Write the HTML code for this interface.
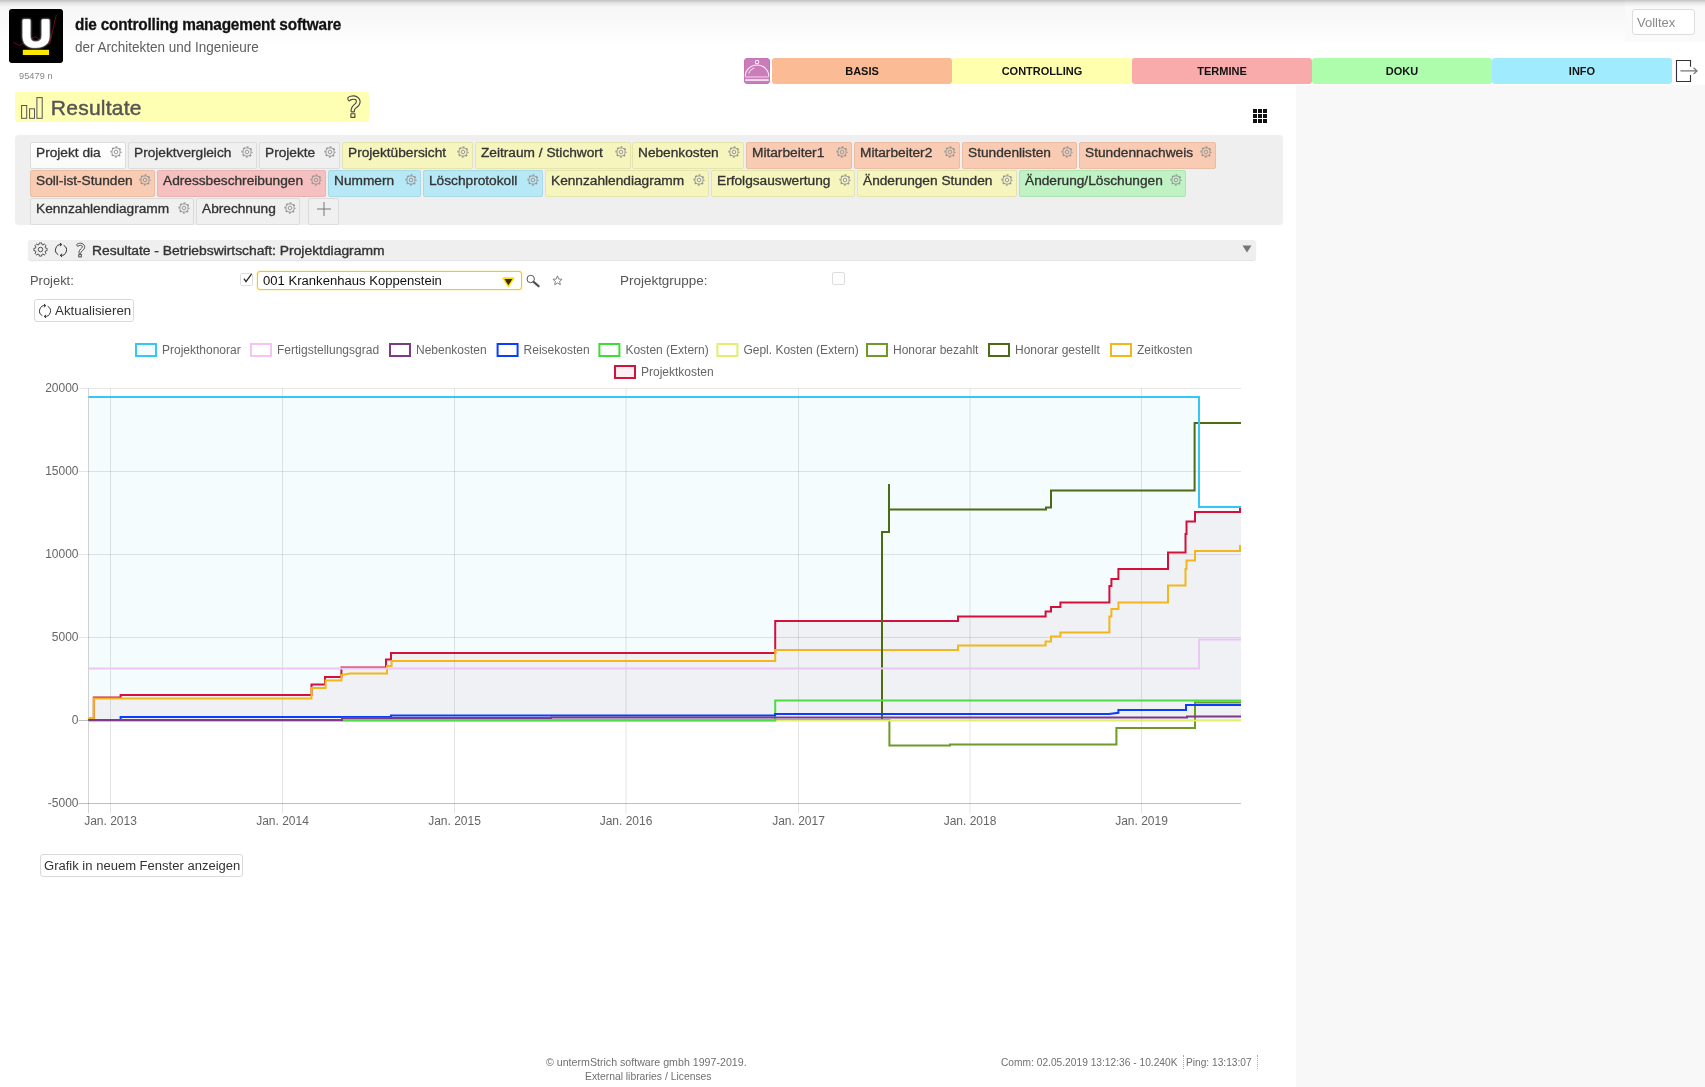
<!DOCTYPE html>
<html lang="de">
<head>
<meta charset="utf-8">
<title>Resultate - Betriebswirtschaft: Projektdiagramm</title>
<style>
html,body{margin:0;padding:0;}
body{width:1705px;height:1087px;overflow:hidden;background:#fff;position:relative;
 font-family:"Liberation Sans","DejaVu Sans",sans-serif;color:#333;font-size:13px;}
#page{position:absolute;left:0;top:0;width:1705px;height:1087px;overflow:hidden;will-change:transform;}
.abs{position:absolute;}
.t{position:absolute;white-space:nowrap;line-height:1;}
#hdr{left:0;top:0;width:1705px;height:88px;background:linear-gradient(#f5f5f5 0px,#f8f8f8 18px,#fcfcfc 34px,#fff 44px);}
#topshade{left:0;top:0;width:1705px;height:7px;background:linear-gradient(rgba(0,0,0,.22),rgba(0,0,0,.07) 45%,rgba(0,0,0,0));}
#rpanel{left:1296px;top:85px;width:409px;height:1002px;background:#f8f8f8;}
.nav{position:absolute;top:58px;height:26px;width:180px;border-radius:3px;text-align:center;
 font-weight:bold;font-size:11px;line-height:26px;color:#111;letter-spacing:0;}
.tab{position:absolute;height:25px;border:1px solid #dcdcdc;border-radius:2px;box-sizing:content-box;
 font-size:12.3px;line-height:1;color:#333;white-space:nowrap;}
.tab span{position:absolute;left:5.4px;top:4.2px;transform-origin:0 0;transform:scaleX(1.113);-webkit-text-stroke:.3px #333;}
.tab svg{position:absolute;right:2.9px;top:2.7px;}
.c0{background:#f0f0f0;} .cy{background:#f5f5bd;border-color:#e4e4ae;} .co{background:#f8cbb2;border-color:#e9bea6;}
.cr{background:#f7c0c0;border-color:#e8b3b3;} .cb{background:#b6e8f6;border-color:#a9d9e7;} .cg{background:#bff3c3;border-color:#b0e3b4;}
.tab.act{background:linear-gradient(#fff,#f9f9f9);}
.btn{position:absolute;border:1px solid #d9d9d9;border-radius:3px;background:#fff;box-sizing:border-box;}
</style>
</head>
<body>
<div id="page">
<div id="hdr" class="abs"></div>
<div class="abs" style="left:1625px;top:0;width:80px;height:42px;background:#fafafa"></div>
<div id="topshade" class="abs"></div>
<div id="rpanel" class="abs"></div>
<svg class="abs" style="left:9px;top:9px" width="54" height="54" viewBox="0 0 54 54">
<defs><filter id="glow" x="-30%" y="-30%" width="160%" height="160%"><feGaussianBlur stdDeviation="1.1" result="b"/><feMerge><feMergeNode in="b"/><feMergeNode in="SourceGraphic"/></feMerge></filter></defs>
<rect x="0" y="0" width="54" height="54" rx="3" ry="3" fill="#000"/>
<polyline points="4.25,33.2 10.5,36.5 15,33.7 20,31 24.1,28.7 26.6,27.9 29.1,29.5 34,33 39,34.1 40.7,34.5 41.5,30.75 47.3,5.9" fill="none" stroke="#b00a22" stroke-width="0.65"/>
<text x="0" y="38.3" text-anchor="middle" transform="translate(27 0) scale(1.07 1)" font-family="Liberation Sans, sans-serif" font-weight="bold" font-size="39" fill="#fff" stroke="#fff" stroke-width="1.6" stroke-linejoin="round" filter="url(#glow)">U</text>
<rect x="13.8" y="40.8" width="26.2" height="5.2" fill="#ffe800"/>
</svg>
<div class="t" style="left:75px;top:16px;font-size:17px;font-weight:bold;color:#111;transform-origin:0 0;transform:scaleX(.904);letter-spacing:-.2px;-webkit-text-stroke:.3px #111" id="ttl">die controlling management software</div>
<div class="t" style="left:75px;top:40px;font-size:14px;color:#5e5e5e;transform-origin:0 0;transform:scaleX(.964)" id="sub">der Architekten und Ingenieure</div>
<div class="t" style="left:19px;top:71.5px;font-size:9.2px;color:#858585;letter-spacing:.05px" id="num">95479 n</div>
<div class="abs" style="left:1632px;top:9px;width:63px;height:26px;box-sizing:border-box;border:1px solid #ddd;border-radius:3px;background:#fff;overflow:hidden"><span class="t" style="left:4px;top:6px;font-size:13px;color:#8a8a8a" id="vt">Volltex</span></div>
<div class="abs" style="left:744px;top:58px;width:26px;height:26px;border-radius:3px;background:#cb7dbb;box-sizing:border-box;border:1px solid #c670b5"></div>
<svg class="abs" style="left:744px;top:58px" width="26" height="26" viewBox="0 0 26 26" fill="none" stroke="#fbf1f9" stroke-width="1.05">
<circle cx="13.05" cy="4" r="1.75"/><path d="M1.25 18.4 A11.8 11.5 0 0 1 24.85 18.4"/><path d="M4.6 15.6 A9 9 0 0 1 10.3 9.9" stroke-width=".9"/>
<rect x="1.2" y="18.1" width="23.6" height="1.7" fill="rgba(255,255,255,.42)" stroke="none"/><rect x="1.2" y="21.1" width="23.6" height="1.9" fill="rgba(255,255,255,.72)" stroke="none"/></svg>
<div class="nav" style="left:772px;background:#fbbc95">BASIS</div>
<div class="nav" style="left:952px;background:#ffffad">CONTROLLING</div>
<div class="nav" style="left:1132px;background:#f9aaaa">TERMINE</div>
<div class="nav" style="left:1312px;background:#adfdad">DOKU</div>
<div class="nav" style="left:1492px;background:#a0ebfd">INFO</div>
<svg class="abs" style="left:1674px;top:57px" width="26" height="28" viewBox="0 0 26 28" fill="none" stroke="#333" stroke-width="1.1">
<path d="M16.5 9.7 V3.5 H2.5 V24.5 H16.5 V18.1"/><path d="M6.4 13.9 H22.6 M19.6 10.7 L23 13.9 L19.6 17.1" stroke="#777" stroke-width="1.3"/></svg>
<div class="abs" style="left:15px;top:92px;width:354px;height:30px;border-radius:3px;background:#ffffb3"></div>
<svg class="abs" style="left:20px;top:96px" width="26" height="24" viewBox="0 0 26 24" fill="none" stroke="#555" stroke-width="1"><rect x="1.6" y="9.5" width="5.1" height="12.8"/><rect x="9.6" y="12.8" width="4.9" height="9.5"/><rect x="16.9" y="1.6" width="5.3" height="20.7"/></svg>
<div class="t" style="left:50.8px;top:97px;font-size:21px;font-weight:normal;color:#555;letter-spacing:.25px;-webkit-text-stroke:.45px #555" id="res">Resultate</div>
<svg class="abs" style="left:345px;top:94px" width="18" height="26" viewBox="0 0 18 26" fill="none" stroke="#4a4a4a" stroke-width="1.15" stroke-linejoin="round"><path d="M3.00 3.60 C3.42 3.05 4.62 2.58 5.60 2.30 C6.58 2.02 7.73 1.75 8.90 1.90 C10.07 2.05 11.62 2.50 12.60 3.20 C13.58 3.90 14.40 5.18 14.80 6.10 C15.20 7.02 15.18 7.77 15.00 8.70 C14.82 9.63 14.40 10.80 13.70 11.70 C13.00 12.60 11.50 13.43 10.80 14.10 C10.10 14.77 9.75 15.12 9.50 15.70 C9.25 16.28 9.59 17.23 9.30 17.60 C9.01 17.97 8.27 17.90 7.75 17.90 C7.23 17.90 6.46 17.97 6.20 17.60 C5.94 17.23 6.05 16.45 6.20 15.70 C6.35 14.95 6.65 13.90 7.10 13.10 C7.55 12.30 8.28 11.57 8.90 10.90 C9.52 10.23 10.40 9.77 10.80 9.10 C11.20 8.43 11.37 7.48 11.30 6.90 C11.23 6.32 10.85 5.88 10.40 5.60 C9.95 5.32 9.28 5.20 8.60 5.20 C7.92 5.20 7.02 5.32 6.30 5.60 C5.58 5.88 4.83 6.90 4.30 6.90 C3.77 6.90 3.32 6.15 3.10 5.60 C2.88 5.05 2.58 4.15 3.00 3.60 Z"/><rect x="5.9" y="19.7" width="4" height="3.6"/></svg>
<svg class="abs" style="left:1253px;top:109px" width="14" height="14" viewBox="0 0 14 14" fill="#111"><rect x="0" y="0" width="4" height="4"/><rect x="5" y="0" width="4" height="4"/><rect x="10" y="0" width="4" height="4"/><rect x="0" y="5" width="4" height="4"/><rect x="5" y="5" width="4" height="4"/><rect x="10" y="5" width="4" height="4"/><rect x="0" y="10" width="4" height="4"/><rect x="5" y="10" width="4" height="4"/><rect x="10" y="10" width="4" height="4"/></svg>
<div class="abs" style="left:15px;top:135px;width:1268px;height:90px;border-radius:4px;background:#efefef"></div>
<div class="tab c0 act" style="left:30px;top:142px;width:94px"><span>Projekt dia</span><svg width="12" height="12" viewBox="-6 -6 12 12" fill="none" stroke="#999"><circle r="5" stroke-width="1.3" stroke-dasharray="1.9 2.027" stroke-dashoffset=".95"/><circle r="4.1" stroke-width="1"/><circle r="1.8" stroke-width="1"/></svg></div>
<div class="tab c0" style="left:128px;top:142px;width:127px"><span>Projektvergleich</span><svg width="12" height="12" viewBox="-6 -6 12 12" fill="none" stroke="#999"><circle r="5" stroke-width="1.3" stroke-dasharray="1.9 2.027" stroke-dashoffset=".95"/><circle r="4.1" stroke-width="1"/><circle r="1.8" stroke-width="1"/></svg></div>
<div class="tab c0" style="left:259px;top:142px;width:79px"><span>Projekte</span><svg width="12" height="12" viewBox="-6 -6 12 12" fill="none" stroke="#999"><circle r="5" stroke-width="1.3" stroke-dasharray="1.9 2.027" stroke-dashoffset=".95"/><circle r="4.1" stroke-width="1"/><circle r="1.8" stroke-width="1"/></svg></div>
<div class="tab cy" style="left:342px;top:142px;width:129px"><span>Projektübersicht</span><svg width="12" height="12" viewBox="-6 -6 12 12" fill="none" stroke="#999"><circle r="5" stroke-width="1.3" stroke-dasharray="1.9 2.027" stroke-dashoffset=".95"/><circle r="4.1" stroke-width="1"/><circle r="1.8" stroke-width="1"/></svg></div>
<div class="tab cy" style="left:475px;top:142px;width:154px"><span>Zeitraum / Stichwort</span><svg width="12" height="12" viewBox="-6 -6 12 12" fill="none" stroke="#999"><circle r="5" stroke-width="1.3" stroke-dasharray="1.9 2.027" stroke-dashoffset=".95"/><circle r="4.1" stroke-width="1"/><circle r="1.8" stroke-width="1"/></svg></div>
<div class="tab cy" style="left:632px;top:142px;width:110px"><span>Nebenkosten</span><svg width="12" height="12" viewBox="-6 -6 12 12" fill="none" stroke="#999"><circle r="5" stroke-width="1.3" stroke-dasharray="1.9 2.027" stroke-dashoffset=".95"/><circle r="4.1" stroke-width="1"/><circle r="1.8" stroke-width="1"/></svg></div>
<div class="tab co" style="left:746px;top:142px;width:104px"><span>Mitarbeiter1</span><svg width="12" height="12" viewBox="-6 -6 12 12" fill="none" stroke="#999"><circle r="5" stroke-width="1.3" stroke-dasharray="1.9 2.027" stroke-dashoffset=".95"/><circle r="4.1" stroke-width="1"/><circle r="1.8" stroke-width="1"/></svg></div>
<div class="tab co" style="left:854px;top:142px;width:104px"><span>Mitarbeiter2</span><svg width="12" height="12" viewBox="-6 -6 12 12" fill="none" stroke="#999"><circle r="5" stroke-width="1.3" stroke-dasharray="1.9 2.027" stroke-dashoffset=".95"/><circle r="4.1" stroke-width="1"/><circle r="1.8" stroke-width="1"/></svg></div>
<div class="tab co" style="left:962px;top:142px;width:113px"><span>Stundenlisten</span><svg width="12" height="12" viewBox="-6 -6 12 12" fill="none" stroke="#999"><circle r="5" stroke-width="1.3" stroke-dasharray="1.9 2.027" stroke-dashoffset=".95"/><circle r="4.1" stroke-width="1"/><circle r="1.8" stroke-width="1"/></svg></div>
<div class="tab co" style="left:1079px;top:142px;width:135px"><span>Stundennachweis</span><svg width="12" height="12" viewBox="-6 -6 12 12" fill="none" stroke="#999"><circle r="5" stroke-width="1.3" stroke-dasharray="1.9 2.027" stroke-dashoffset=".95"/><circle r="4.1" stroke-width="1"/><circle r="1.8" stroke-width="1"/></svg></div>
<div class="tab co" style="left:30px;top:170px;width:123px"><span>Soll-ist-Stunden</span><svg width="12" height="12" viewBox="-6 -6 12 12" fill="none" stroke="#999"><circle r="5" stroke-width="1.3" stroke-dasharray="1.9 2.027" stroke-dashoffset=".95"/><circle r="4.1" stroke-width="1"/><circle r="1.8" stroke-width="1"/></svg></div>
<div class="tab cr" style="left:157px;top:170px;width:167px"><span>Adressbeschreibungen</span><svg width="12" height="12" viewBox="-6 -6 12 12" fill="none" stroke="#999"><circle r="5" stroke-width="1.3" stroke-dasharray="1.9 2.027" stroke-dashoffset=".95"/><circle r="4.1" stroke-width="1"/><circle r="1.8" stroke-width="1"/></svg></div>
<div class="tab cb" style="left:328px;top:170px;width:91px"><span>Nummern</span><svg width="12" height="12" viewBox="-6 -6 12 12" fill="none" stroke="#999"><circle r="5" stroke-width="1.3" stroke-dasharray="1.9 2.027" stroke-dashoffset=".95"/><circle r="4.1" stroke-width="1"/><circle r="1.8" stroke-width="1"/></svg></div>
<div class="tab cb" style="left:423px;top:170px;width:118px"><span>Löschprotokoll</span><svg width="12" height="12" viewBox="-6 -6 12 12" fill="none" stroke="#999"><circle r="5" stroke-width="1.3" stroke-dasharray="1.9 2.027" stroke-dashoffset=".95"/><circle r="4.1" stroke-width="1"/><circle r="1.8" stroke-width="1"/></svg></div>
<div class="tab cy" style="left:545px;top:170px;width:162px"><span>Kennzahlendiagramm</span><svg width="12" height="12" viewBox="-6 -6 12 12" fill="none" stroke="#999"><circle r="5" stroke-width="1.3" stroke-dasharray="1.9 2.027" stroke-dashoffset=".95"/><circle r="4.1" stroke-width="1"/><circle r="1.8" stroke-width="1"/></svg></div>
<div class="tab cy" style="left:711px;top:170px;width:142px"><span>Erfolgsauswertung</span><svg width="12" height="12" viewBox="-6 -6 12 12" fill="none" stroke="#999"><circle r="5" stroke-width="1.3" stroke-dasharray="1.9 2.027" stroke-dashoffset=".95"/><circle r="4.1" stroke-width="1"/><circle r="1.8" stroke-width="1"/></svg></div>
<div class="tab cy" style="left:857px;top:170px;width:158px"><span>Änderungen Stunden</span><svg width="12" height="12" viewBox="-6 -6 12 12" fill="none" stroke="#999"><circle r="5" stroke-width="1.3" stroke-dasharray="1.9 2.027" stroke-dashoffset=".95"/><circle r="4.1" stroke-width="1"/><circle r="1.8" stroke-width="1"/></svg></div>
<div class="tab cg" style="left:1019px;top:170px;width:165px"><span>Änderung/Löschungen</span><svg width="12" height="12" viewBox="-6 -6 12 12" fill="none" stroke="#999"><circle r="5" stroke-width="1.3" stroke-dasharray="1.9 2.027" stroke-dashoffset=".95"/><circle r="4.1" stroke-width="1"/><circle r="1.8" stroke-width="1"/></svg></div>
<div class="tab c0" style="left:30px;top:198px;width:162px"><span>Kennzahlendiagramm</span><svg width="12" height="12" viewBox="-6 -6 12 12" fill="none" stroke="#999"><circle r="5" stroke-width="1.3" stroke-dasharray="1.9 2.027" stroke-dashoffset=".95"/><circle r="4.1" stroke-width="1"/><circle r="1.8" stroke-width="1"/></svg></div>
<div class="tab c0" style="left:196px;top:198px;width:102px"><span>Abrechnung</span><svg width="12" height="12" viewBox="-6 -6 12 12" fill="none" stroke="#999"><circle r="5" stroke-width="1.3" stroke-dasharray="1.9 2.027" stroke-dashoffset=".95"/><circle r="4.1" stroke-width="1"/><circle r="1.8" stroke-width="1"/></svg></div>
<div class="tab c0" style="left:308px;top:198px;width:29px"><svg style="left:7.5px;top:2.5px;right:auto" width="14" height="14" viewBox="0 0 14 14" stroke="#777" stroke-width="1" fill="none"><path d="M7 0 V14 M0 7 H14"/></svg></div>
<div class="abs" style="left:28px;top:240px;width:1228px;height:20px;border-radius:3px;background:#efefef;box-shadow:0 1px 1px rgba(0,0,0,.12)"></div>
<svg class="abs" style="left:33px;top:242px" width="15" height="15" viewBox="0 0 16 16" fill="none" stroke="#444" stroke-width="1.0" stroke-linejoin="round"><path d="M6.48 2.71 L6.71 1.02 A7.10 7.10 0 0 1 9.29 1.02 L9.52 2.71 A5.50 5.50 0 0 1 10.66 3.19 L12.03 2.15 A7.10 7.10 0 0 1 13.85 3.97 L12.81 5.34 A5.50 5.50 0 0 1 13.29 6.48 L14.98 6.71 A7.10 7.10 0 0 1 14.98 9.29 L13.29 9.52 A5.50 5.50 0 0 1 12.81 10.66 L13.85 12.03 A7.10 7.10 0 0 1 12.03 13.85 L10.66 12.81 A5.50 5.50 0 0 1 9.52 13.29 L9.29 14.98 A7.10 7.10 0 0 1 6.71 14.98 L6.48 13.29 A5.50 5.50 0 0 1 5.34 12.81 L3.97 13.85 A7.10 7.10 0 0 1 2.15 12.03 L3.19 10.66 A5.50 5.50 0 0 1 2.71 9.52 L1.02 9.29 A7.10 7.10 0 0 1 1.02 6.71 L2.71 6.48 A5.50 5.50 0 0 1 3.19 5.34 L2.15 3.97 A7.10 7.10 0 0 1 3.97 2.15 L5.34 3.19 A5.50 5.50 0 0 1 6.48 2.71 Z"/><circle cx="8" cy="8" r="2.4"/></svg>
<svg class="abs" style="left:52px;top:241px" width="18" height="18" viewBox="-9 -9 18 18" fill="none" stroke="#333" stroke-width="1.0"><path d="M-2.70 4.68 A5.4 5.4 0 0 1 0.6 -5.4 M2.70 -4.68 A5.4 5.4 0 0 1 -0.6 5.4"/><path d="M-1.1 -7.00 L0.8 -5.40 L-1.1 -3.80 M1.1 3.80 L-0.8 5.40 L1.1 7.00"/></svg>
<svg class="abs" style="left:75.2px;top:241.9px" width="11.52" height="16.64" viewBox="0 0 18 26" fill="none" stroke="#444" stroke-width="1.45"><path d="M3.00 3.60 C3.42 3.05 4.62 2.58 5.60 2.30 C6.58 2.02 7.73 1.75 8.90 1.90 C10.07 2.05 11.62 2.50 12.60 3.20 C13.58 3.90 14.40 5.18 14.80 6.10 C15.20 7.02 15.18 7.77 15.00 8.70 C14.82 9.63 14.40 10.80 13.70 11.70 C13.00 12.60 11.50 13.43 10.80 14.10 C10.10 14.77 9.75 15.12 9.50 15.70 C9.25 16.28 9.59 17.23 9.30 17.60 C9.01 17.97 8.27 17.90 7.75 17.90 C7.23 17.90 6.46 17.97 6.20 17.60 C5.94 17.23 6.05 16.45 6.20 15.70 C6.35 14.95 6.65 13.90 7.10 13.10 C7.55 12.30 8.28 11.57 8.90 10.90 C9.52 10.23 10.40 9.77 10.80 9.10 C11.20 8.43 11.37 7.48 11.30 6.90 C11.23 6.32 10.85 5.88 10.40 5.60 C9.95 5.32 9.28 5.20 8.60 5.20 C7.92 5.20 7.02 5.32 6.30 5.60 C5.58 5.88 4.83 6.90 4.30 6.90 C3.77 6.90 3.32 6.15 3.10 5.60 C2.88 5.05 2.58 4.15 3.00 3.60 Z"/><rect x="5.9" y="19.7" width="4" height="3.6"/></svg>
<div class="t" id="sect" style="left:91.8px;top:244.73px;font-size:12.5px;color:#333;transform-origin:0 0;transform:scaleX(1.1080);-webkit-text-stroke:.35px #333;">Resultate - Betriebswirtschaft: Projektdiagramm</div>
<svg class="abs" style="left:1242px;top:245px" width="10" height="8" viewBox="0 0 10 8"><path d="M.5 .5 H9.5 L5 7.5 Z" fill="#777"/></svg>
<div class="t" id="lp" style="left:29.7px;top:274.82px;font-size:12.5px;color:#555;transform-origin:0 0;transform:scaleX(1.0332);">Projekt:</div>
<div class="abs" style="left:240px;top:273px;width:13px;height:13px;box-sizing:border-box;border:1px solid #ddd;border-radius:2px;background:#fff"></div>
<svg class="abs" style="left:241px;top:273px" width="12" height="12" viewBox="0 0 12 12" fill="none" stroke="#222" stroke-width="1.1"><path d="M3 5.6 L5 8.6 L10.6 0.8" stroke-width="1.2"/></svg>
<div class="abs" style="left:257px;top:271px;width:265px;height:19px;box-sizing:border-box;border:1px solid #f4cc00;border-radius:3px;background:#fff;box-shadow:0 0 1.5px rgba(247,208,0,.9)"></div>
<div class="t" id="sel" style="left:262.5px;top:274.82px;font-size:12.5px;color:#111;transform-origin:0 0;transform:scaleX(1.0464);">001 Krankenhaus Koppenstein</div>
<svg class="abs" style="left:500px;top:275px" width="17" height="15" viewBox="0 0 17 15"><path d="M3.6 3.4 H13.2 L8.4 11 Z" fill="#3a2600" stroke="#ffe000" stroke-width="2.2" stroke-linejoin="round"/><path d="M4.4 3.9 H12.4 L8.4 10.2 Z" fill="#3a2600"/></svg>
<svg class="abs" style="left:524px;top:272px" width="18" height="18" viewBox="0 0 18 18" fill="none" stroke="#555" stroke-width="1"><circle cx="6.7" cy="7" r="3.7"/><path d="M9.6 9.9 L14.6 14.2" stroke-width="2.4" stroke="#666" stroke-linecap="round"/><path d="M9.4 9.7 L14.8 14.4" stroke-width=".8" stroke="#333"/></svg>
<svg class="abs" style="left:552px;top:274.5px" width="11" height="11" viewBox="0 0 12 12" fill="none" stroke="#777" stroke-width="1"><path d="M6 1 L7.4 4.4 L11 4.7 L8.3 7 L9.1 10.6 L6 8.7 L2.9 10.6 L3.7 7 L1 4.7 L4.6 4.4 Z"/></svg>
<div class="t" id="lpg" style="left:620px;top:274.82px;font-size:12.5px;color:#555;transform-origin:0 0;transform:scaleX(1.0761);">Projektgruppe:</div>
<div class="abs" style="left:832px;top:272px;width:13px;height:13px;box-sizing:border-box;border:1px solid #dcdcdc;border-radius:2px;background:#fff"></div>
<div class="btn" style="left:34px;top:299px;width:100px;height:23px"></div>
<svg class="abs" style="left:36px;top:301.5px" width="18" height="18" viewBox="-9 -9 18 18" fill="none" stroke="#333" stroke-width="1.0"><path d="M-2.70 4.68 A5.4 5.4 0 0 1 0.6 -5.4 M2.70 -4.68 A5.4 5.4 0 0 1 -0.6 5.4"/><path d="M-1.1 -7.00 L0.8 -5.40 L-1.1 -3.80 M1.1 3.80 L-0.8 5.40 L1.1 7.00"/></svg>
<div class="t" id="akt" style="left:54.9px;top:304.62px;font-size:12.5px;color:#333;transform-origin:0 0;transform:scaleX(1.0646);">Aktualisieren</div>
<div class="btn" style="left:40px;top:854px;width:203px;height:23px"></div>
<div class="t" id="graf" style="left:43.5px;top:859.92px;font-size:12.5px;color:#333;transform-origin:0 0;transform:scaleX(1.0425);">Grafik in neuem Fenster anzeigen</div>
<svg class="abs" style="left:0;top:330px" width="1296" height="510" viewBox="0 330 1296 510" font-family="Liberation Sans, Arial, sans-serif" font-size="12" fill="#666">
<path d="M88.5 397 H1199 V507 H1241 V720.5 H88.5 Z" fill="#f4fcfe"/>
<path d="M88.5 720 H93.8 V697.6 H120.6 V695 H311.5 V684.6 H325 V677 H341.4 V667.4 H386 V659.6 H391 V653 H775.2 V621 H958 V616.4 H1045.6 V611.6 H1051 V607 H1060.4 V602.4 H1109.4 V586 H1111.4 V579 H1118.4 V569 H1168 V552.4 H1185.5 V534 H1186.5 V521.4 H1195 V512 H1240 V509 H1241 V720.5 H88.5 Z" fill="#eff1f5"/>
<path d="M110.5 388.5 V813.5 M282.5 388.5 V813.5 M454.5 388.5 V813.5 M626 388.5 V813.5 M798.5 388.5 V813.5 M970 388.5 V813.5 M1141.5 388.5 V813.5 M78.5 388.5 H1241 M78.5 471.5 H1241 M78.5 554.5 H1241 M78.5 637.5 H1241 M78.5 803.5 H1241 " stroke="rgba(0,0,0,.1)" stroke-width="1" fill="none"/>
<path d="M88.5 388.5 V813.5 M78.5 803.5 H1241" stroke="rgba(0,0,0,.17)" stroke-width="1" fill="none"/>
<path d="M78.5 720.5 H1241" stroke="rgba(0,0,0,.25)" stroke-width="1" fill="none"/>
<path d="M88.5 720 H93.8 V697.6 H120.6 V695 H311.5 V684.6 H325 V677 H341.4 V667.4 H386 V659.6 H391 V653 H775.2 V621 H958 V616.4 H1045.6 V611.6 H1051 V607 H1060.4 V602.4 H1109.4 V586 H1111.4 V579 H1118.4 V569 H1168 V552.4 H1185.5 V534 H1186.5 V521.4 H1195 V512 H1240 V509 H1241" fill="none" stroke="#d3123b" stroke-width="2" stroke-linejoin="miter"/>
<path d="M88.5 720 L89.5 718 H93.8 V698.6 H311.5 V688 H325.6 V680.6 H341.4 V675 L350 673.6 H387 V666 H391.6 V661 H775.2 V650 H958 V645.6 H1045.6 V641.4 H1051 V636.6 H1060.4 V632.4 H1109.4 V616.4 H1111.4 V609 H1118.4 V602.6 H1168 V585.4 H1185.5 V569 H1186.5 V560.4 H1195 V551 H1240 V546 H1241" fill="none" stroke="#f2b71a" stroke-width="2" stroke-linejoin="miter"/>
<path d="M88.5 720 H882 V532 H889 V484 V509.6 H1046 V507.6 H1051 V490.6 H1194.6 V423 H1241" fill="none" stroke="#4b6b14" stroke-width="2" stroke-linejoin="miter"/>
<path d="M88.5 720 H889.4 V745.4 H950 V744.6 H1116.4 V728 H1195 V702.4 H1241" fill="none" stroke="#6f9a27" stroke-width="2" stroke-linejoin="miter"/>
<path d="M88.5 720.6 H1241" fill="none" stroke="#e2ee6e" stroke-width="2" stroke-linejoin="miter"/>
<path d="M88.5 720.5 H775.2 V700.4 H1241" fill="none" stroke="#4ddb46" stroke-width="2" stroke-linejoin="miter"/>
<path d="M88.5 720 H120.6 V717 H391 V715.4 H775 V714 H1109 L1118.4 712.8 V710 H1186 V705 H1241" fill="none" stroke="#0b3dff" stroke-width="2" stroke-linejoin="miter"/>
<path d="M88.5 720 H342 V718 H551 V717.6 H1187 V716.6 H1241" fill="none" stroke="#7c3b86" stroke-width="2" stroke-linejoin="miter"/>
<path d="M88.5 668.5 H1199 V639.6 H1241" fill="none" stroke="#ecc6f5" stroke-width="2" stroke-linejoin="miter"/>
<path d="M88.5 397 H1199 V507 H1241" fill="none" stroke="#36c5f4" stroke-width="2" stroke-linejoin="miter"/>
<text x="78.5" y="392.0" text-anchor="end">20000</text>
<text x="78.5" y="475.0" text-anchor="end">15000</text>
<text x="78.5" y="558.0" text-anchor="end">10000</text>
<text x="78.5" y="641.0" text-anchor="end">5000</text>
<text x="78.5" y="724.0" text-anchor="end">0</text>
<text x="78.5" y="807.0" text-anchor="end">-5000</text>
<text x="110.5" y="825" text-anchor="middle">Jan. 2013</text>
<text x="282.5" y="825" text-anchor="middle">Jan. 2014</text>
<text x="454.5" y="825" text-anchor="middle">Jan. 2015</text>
<text x="626" y="825" text-anchor="middle">Jan. 2016</text>
<text x="798.5" y="825" text-anchor="middle">Jan. 2017</text>
<text x="970" y="825" text-anchor="middle">Jan. 2018</text>
<text x="1141.5" y="825" text-anchor="middle">Jan. 2019</text>
<rect x="136" y="344" width="20" height="12" fill="rgba(54,197,244,.06)" stroke="#36c5f4" stroke-width="2"/><text x="162" y="354.3">Projekthonorar</text>
<rect x="251" y="344" width="20" height="12" fill="#fff" stroke="#f5c4f7" stroke-width="2"/><text x="277" y="354.3">Fertigstellungsgrad</text>
<rect x="390" y="344" width="20" height="12" fill="#fff" stroke="#7c3b86" stroke-width="2"/><text x="416" y="354.3">Nebenkosten</text>
<rect x="497.6" y="344" width="20" height="12" fill="#fff" stroke="#0b3dff" stroke-width="2"/><text x="523.6" y="354.3">Reisekosten</text>
<rect x="599.4" y="344" width="20" height="12" fill="#fff" stroke="#3ddc36" stroke-width="2"/><text x="625.4" y="354.3">Kosten (Extern)</text>
<rect x="717.4" y="344" width="20" height="12" fill="#fff" stroke="#e2ee6e" stroke-width="2"/><text x="743.4" y="354.3">Gepl. Kosten (Extern)</text>
<rect x="867" y="344" width="20" height="12" fill="#fff" stroke="#6f9a27" stroke-width="2"/><text x="893" y="354.3">Honorar bezahlt</text>
<rect x="989" y="344" width="20" height="12" fill="#fff" stroke="#4b6b14" stroke-width="2"/><text x="1015" y="354.3">Honorar gestellt</text>
<rect x="1111" y="344" width="20" height="12" fill="#fff" stroke="#f2b71a" stroke-width="2"/><text x="1137" y="354.3">Zeitkosten</text>
<rect x="615" y="366" width="20" height="12" fill="rgba(220,20,60,.07)" stroke="#d3123b" stroke-width="2"/><text x="641" y="376.3">Projektkosten</text>
</svg>

<div class="t" id="f1" style="left:546.2px;top:1057.97px;font-size:10.2px;color:#707070;transform-origin:0 0;transform:scaleX(1.0441);">© untermStrich software gmbh 1997-2019.</div>
<div class="t" id="f2" style="left:584.5px;top:1071.77px;font-size:10.2px;color:#707070;transform-origin:0 0;transform:scaleX(1.0154);">External libraries / Licenses</div>
<div class="t" id="f3" style="left:1001.3px;top:1057.97px;font-size:10.2px;color:#707070;transform-origin:0 0;transform:scaleX(1.0020);">Comm: 02.05.2019 13:12:36 - 10.240K</div>
<div class="t" id="f4" style="left:1186.4px;top:1057.97px;font-size:10.2px;color:#707070;transform-origin:0 0;transform:scaleX(0.9982);">Ping: 13:13:07</div>
<div class="abs" style="left:1183px;top:1055px;width:0;height:14px;border-left:1px dotted #aaa"></div>
<div class="abs" style="left:1257px;top:1055px;width:0;height:14px;border-left:1px dotted #aaa"></div>
</div>
</body>
</html>
